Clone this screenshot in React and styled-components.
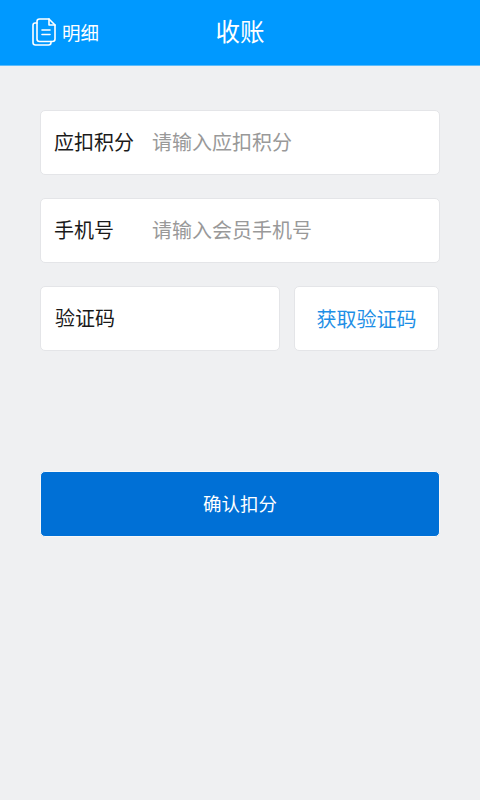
import React from "react"
import styled, { createGlobalStyle } from "styled-components"

const GlobalStyle = createGlobalStyle`
  html, body {
    margin: 0;
    padding: 0;
    background: #eff0f2;
  }

  body {
    font-family: "Noto Sans CJK SC", "Liberation Sans", sans-serif;
  }

  * {
    box-sizing: border-box;
  }
`

const Page = styled.div`
  min-height: 800px;
  background: #eff0f2;
`

const Header = styled.header`
  height: 66px;
  background: #0099ff;
  border-bottom: 1px solid #5cbcfb;
  display: grid;
  grid-template-columns: 1fr auto 1fr;
  align-items: center;
  padding: 0 32px 2px;
  color: #fff;
`

const DetailLink = styled.a`
  display: flex;
  align-items: center;
  gap: 6px;
  font-size: 18.5px;
  color: #fff;
`

const Title = styled.h1`
  margin: 0 0 2px;
  font-size: 24.5px;
  font-weight: 400;
`

const Form = styled.form`
  display: flex;
  flex-direction: column;
  gap: 23px;
  padding: 44px 40px 0;
`

const Row = styled.div`
  display: flex;
  gap: 14px;
  padding-right: 1px;
`

const Card = styled.div`
  flex: 1 1 auto;
  height: 65px;
  display: flex;
  align-items: center;
  padding: 0 0 3px 13px;
  background: #fff;
  border: 1px solid #e4e5e8;
  border-radius: 5px;
`

const Label = styled.span`
  width: 98px;
  padding-left: ${props => props.$inset || 0}px;
  font-size: 20px;
  color: #1a1a1a;
`

const Placeholder = styled.span`
  font-size: 20px;
  color: #999;
`

const CodeButton = styled.div`
  flex: none;
  width: 145px;
  height: 65px;
  display: flex;
  align-items: center;
  justify-content: center;
  background: #fff;
  border: 1px solid #e4e5e8;
  border-radius: 5px;
  font-size: 20px;
  color: #1e8fe6;
`

const Submit = styled.div`
  height: 66px;
  margin-top: 97px;
  padding-bottom: 2px;
  display: flex;
  align-items: center;
  justify-content: center;
  background: #0070d6;
  border: 1px solid #f7f8f9;
  border-radius: 5px;
  font-size: 18.5px;
  color: #fff;
`

const DetailIcon = () => (
  <svg width="24" height="28" viewBox="0 0 24 28" fill="none" stroke="#fff" strokeWidth="1.6" strokeLinejoin="round" strokeLinecap="round">
    <path d="M5 5H3.2C2 5 1 6 1 7.2V24.5C1 25.9 2.1 27 3.5 27H16.5C18 27 19 26 19 24.5V23.5" />
    <path d="M5 3.5C5 2.1 6.1 1 7.5 1H17L23 7V21C23 22.4 21.9 23.5 20.5 23.5H7.5C6.1 23.5 5 22.4 5 21Z" />
    <path d="M17 1V7H23" />
    <path d="M10 12H18M10 16.5H18" />
  </svg>
)

const App = () => {
  return (
    <Page>
      <GlobalStyle />
      <Header>
        <DetailLink>
          <DetailIcon />
          明细
        </DetailLink>
        <Title>收账</Title>
      </Header>
      <Form>
        <Card>
          <Label>应扣积分</Label>
          <Placeholder>请输入应扣积分</Placeholder>
        </Card>
        <Card>
          <Label>手机号</Label>
          <Placeholder>请输入会员手机号</Placeholder>
        </Card>
        <Row>
          <Card>
            <Label $inset={1}>验证码</Label>
          </Card>
          <CodeButton>获取验证码</CodeButton>
        </Row>
        <Submit>确认扣分</Submit>
      </Form>
    </Page>
  )
}

export default App
